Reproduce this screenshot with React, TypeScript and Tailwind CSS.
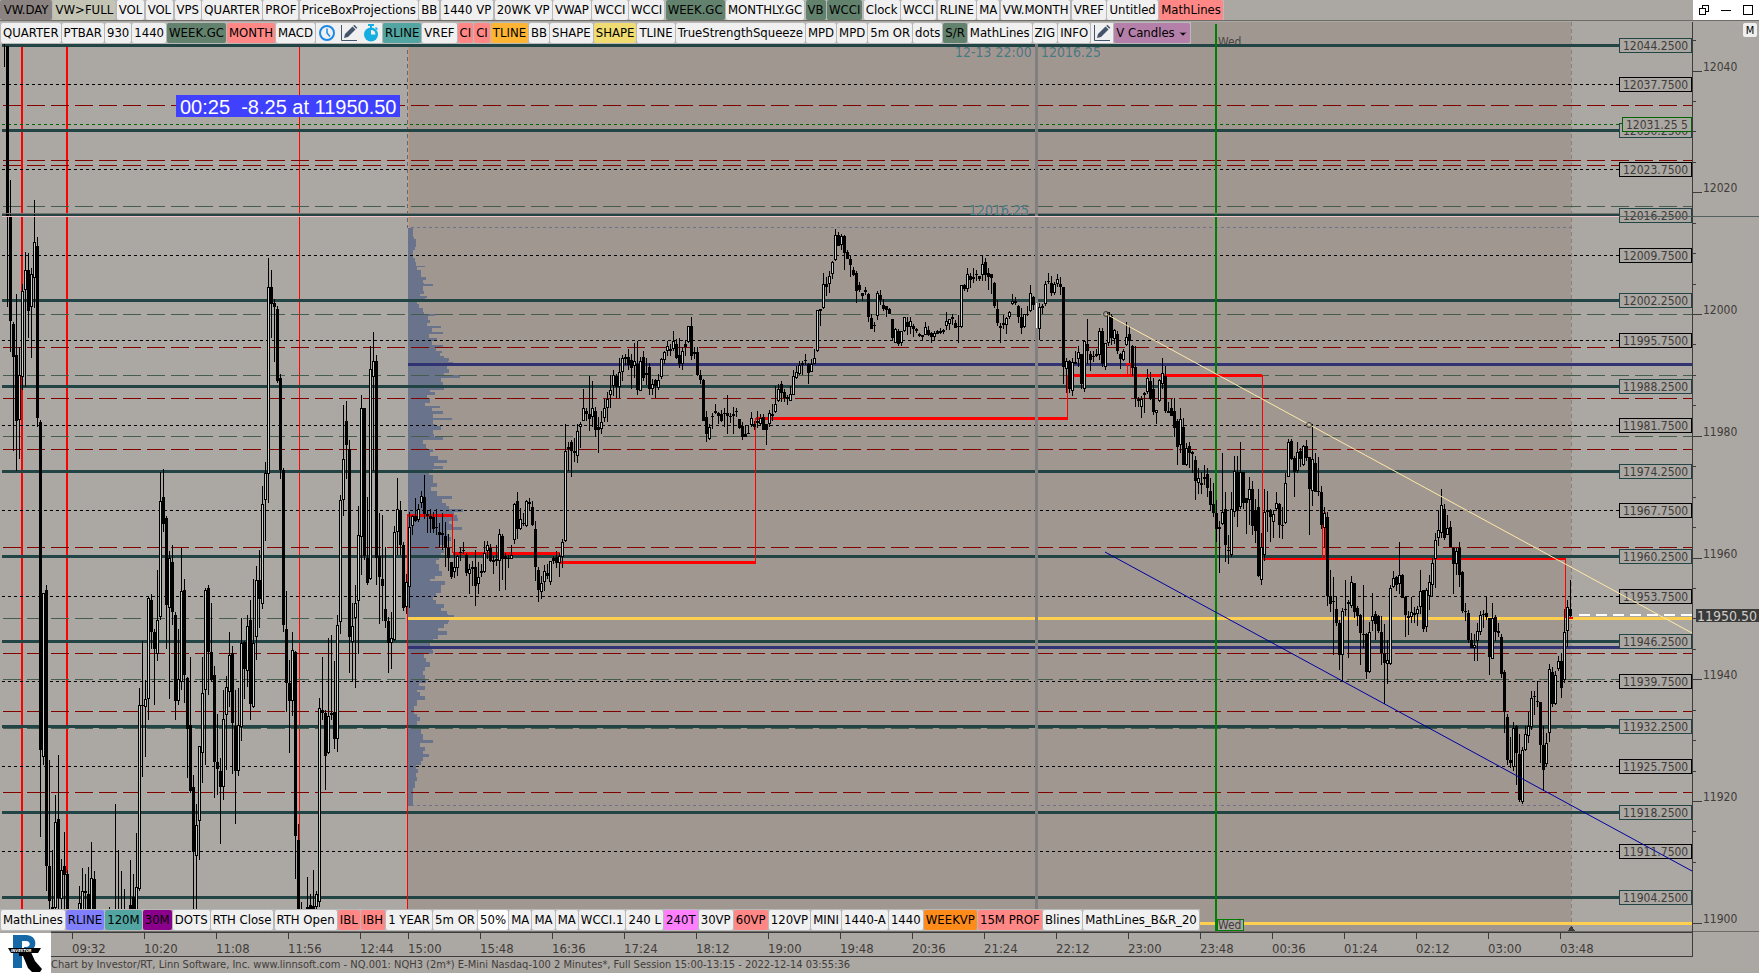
import { ChevronDown } from "lucide-react";

type Tone = { label: string; tone?: string };

const GREEN = "bg-[#63826d]";
const PINK = "bg-[#ff8886]";
const TEAL = "bg-[#52a5a1]";

const tabs: Tone[] = [
    { label: "VW.DAY", tone: "bg-[#8b8381] w-[52px]" },
    { label: "VW>FULL", tone: "bg-[#c3c4b4] w-[62px]" },
    { label: "VOL" },
    { label: "VOL" },
    { label: "VPS" },
    { label: "QUARTER" },
    { label: "PROF" },
    { label: "PriceBoxProjections" },
    { label: "BB" },
    { label: "1440 VP" },
    { label: "20WK VP" },
    { label: "VWAP" },
    { label: "WCCI" },
    { label: "WCCI" },
    { label: "WEEK.GC", tone: GREEN },
    { label: "MONTHLY.GC" },
    { label: "VB", tone: GREEN },
    { label: "WCCI", tone: GREEN },
    { label: "Clock" },
    { label: "WCCI" },
    { label: "RLINE" },
    { label: "MA" },
    { label: "VW.MONTH" },
    { label: "VREF" },
    { label: "Untitled" },
    { label: "MathLines", tone: PINK },
];

const toolsLeft: Tone[] = [
    { label: "QUARTER" },
    { label: "PTBAR" },
    { label: "930" },
    { label: "1440" },
    { label: "WEEK.GC", tone: GREEN },
    { label: "MONTH", tone: PINK },
    { label: "MACD" },
];

const toolsRight: Tone[] = [
    { label: "RLINE", tone: TEAL },
    { label: "VREF" },
    { label: "CI", tone: PINK },
    { label: "CI", tone: PINK },
    { label: "TLINE", tone: "bg-[#ffb533]" },
    { label: "BB" },
    { label: "SHAPE" },
    { label: "SHAPE", tone: "bg-[#f0dc70]" },
    { label: "TLINE" },
    { label: "TrueStrengthSqueeze" },
    { label: "MPD" },
    { label: "MPD" },
    { label: "5m OR" },
    { label: "dots" },
    { label: "S/R", tone: GREEN },
    { label: "MathLines" },
    { label: "ZIG" },
    { label: "INFO" },
];

const bottomTools: Tone[] = [
    { label: "MathLines" },
    { label: "RLINE", tone: "bg-[#8080ff]" },
    { label: "120M", tone: TEAL },
    { label: "30M", tone: "bg-[#8b008b]" },
    { label: "DOTS" },
    { label: "RTH Close" },
    { label: "RTH Open" },
    { label: "IBL", tone: PINK },
    { label: "IBH", tone: PINK },
    { label: "1 YEAR" },
    { label: "5m OR" },
    { label: "50%", tone: "bg-white" },
    { label: "MA" },
    { label: "MA" },
    { label: "MA" },
    { label: "WCCI.1" },
    { label: "240 L" },
    { label: "240T", tone: "bg-[#ff80ff]" },
    { label: "30VP" },
    { label: "60VP", tone: PINK },
    { label: "120VP" },
    { label: "MINI" },
    { label: "1440-A" },
    { label: "1440" },
    { label: "WEEKVP", tone: "bg-[#ff8c1a]" },
    { label: "15M PROF", tone: PINK },
    { label: "Blines" },
    { label: "MathLines_B&R_20" },
];

// price scale: 12044.25 sits at y 45, one point is 6.087 units
const priceY = (price: number) => Math.floor(45.2 + (12044.25 - price) * 6.087);

const LEFT = 2;
const RIGHT = 1692;
const OPEN_X = 408;
const NOW_X = 1571;

const solidLevels = Array.from({ length: 11 }, (_, i) => 12044.25 - i * 14);
const dottedLevels = Array.from({ length: 10 }, (_, i) => 12037.75 - i * 14);
const redDashes = [105, 160, 165, 347, 398, 449, 547, 653, 711, 792];
const greenDashes = [206, 314, 375, 436, 618, 679, 728];
const majorTicks = [12040, 12020, 12000, 11980, 11960, 11940, 11920, 11900];
const minorTicks = Array.from({ length: 28 }, (_, i) => 12045 - i * 5).filter((p) => p > 11900 && p % 20 !== 0);

const timeTicks: [number, string][] = [
    [72, "09:32"], [144, "10:20"], [216, "11:08"], [288, "11:56"], [360, "12:44"], [408, "15:00"],
    [480, "15:48"], [552, "16:36"], [624, "17:24"], [696, "18:12"], [768, "19:00"], [840, "19:48"],
    [912, "20:36"], [984, "21:24"], [1056, "22:12"], [1128, "23:00"], [1200, "23:48"], [1272, "00:36"],
    [1344, "01:24"], [1416, "02:12"], [1488, "03:00"], [1560, "03:48"],
];

// volume profile outline, "y width" pairs
const profile =
    "228 5,237 6,239 8,247 7,250 5,258 7,262 8,265 8,266 17,267 9,270 13,277 18,280 15,283 16,284 25,286 15,291 16,294 12,296 19,298 17,300 9,304 11,308 15,312 16,313 16,314 27,316 20,320 22,323 19,325 19,326 33,328 24,331 24,332 35,334 21,338 29,341 24,344 24,345 35,347 28,350 28,351 34,353 32,356 36,358 41,361 40,362 45,365 39,369 41,373 36,375 52,376 52,378 33,382 35,386 36,390 22,392 27,395 19,398 22,403 17,405 17,406 32,408 24,411 35,414 25,417 25,418 44,420 25,424 27,426 33,430 25,434 26,436 26,437 35,440 15,444 18,448 19,449 25,452 22,456 30,460 39,463 26,466 35,469 25,472 21,475 25,479 25,483 29,487 23,491 29,495 29,496 44,499 34,503 38,506 41,508 41,509 55,512 46,515 49,518 50,521 41,524 44,526 44,527 54,530 39,534 41,537 43,541 36,545 31,549 36,553 33,557 31,560 28,564 31,568 31,571 34,576 27,579 22,581 37,585 33,589 33,593 28,597 25,600 28,604 36,608 33,611 39,614 40,615 46,618 41,622 40,624 36,628 30,630 30,631 39,635 30,639 25,643 22,647 24,650 25,654 16,658 18,662 22,667 17,671 15,675 17,679 18,683 11,686 17,690 9,692 12,696 17,700 9,703 9,706 6,710 6,714 9,717 12,721 9,725 6,729 13,734 15,738 15,740 25,743 12,747 17,751 15,754 21,757 15,761 13,765 8,769 10,773 8,777 9,781 7,784 7,788 5,806 5";

type Segment = { x: number; y: number; unit: number; bars: string };

// "high top bottom low" per bar, a trailing u marks a rising (hollow) bar
const segments: Segment[] = [
    {
        x: 7, y: 220, unit: 2.24,
        bars: "-390 -390 -9 195,-90 -10 227 295,228 232 307 517,166 303 450 563,285 348 449 535u,144 159 352 381u,72 112 157 373u,74 112 203 264,108 120 195 308u,-45 50 130 196u,37 59 444 463,447 452 1188 1383,836 836 1203 1220u,818 829 1447 1504,1210 1446 1526 1560,1411 1538 1560 1560,1288 1348 1542 1560u,1198 1341 1518 1560,1432 1457 1521 1545u,1371 1446 1468 1545,1457 1464 1580 1600,1600 1600 1601 1601,1600 1600 1601 1601,1600 1600 1601 1601,1492 1530 1600 1600u,1452 1504 1600 1600u,1464 1504 1508 1600,1449 1510 1560 1600,1393 1473 1600 1600u,1458 1477 1600 1600,1600 1600 1601 1601,1600 1600 1601 1601,1600 1600 1601 1601,1600 1600 1601 1601,1540 1600 1601 1601,1600 1600 1601 1601,1308 1600 1601 1601,1411 1600 1601 1601,1458 1600 1601 1601,1499 1600 1601 1601,1600 1600 1601 1601,1434 1535 1560 1600,1465 1517 1600 1600,1373 1495 1600 1600u,1048 1087 1498 1504u,943 1086 1089 1247,1030 1074 1090 1202u,844 846 1072 1119u,837 851 922 962,916 922 962 1086,785 896 972 987u,564 629 890 896u,558 621 680 698,664 668 863 960,741 757 868 1072u,728 765 877 908,878 884 1078 1119,916 1028 1078 1086u,735 830 1034 1053u,804 829 1020 1083,1023 1027 1140 1250,978 1132 1280 1284,1243 1271 1416 1600,1308 1356 1425 1600u,1178 1178 1346 1433u,978 1060 1194 1260u,824 829 1053 1220u,818 824 968 1063,858 968 1030 1034,1000 1019 1215 1294,1107 1215 1230 1289,1206 1234 1269 1397,1053 1118 1269 1300u,1021 1046 1108 1233u,922 974 1058 1090u,954 971 1127 1240,1053 1134 1235 1354,1048 1132 1234 1245u,892 948 1136 1168u,942 946 1006 1073,884 909 1010 1046u,851 896 1084 1120,804 948 1090 1092u,776 807 934 985u,740 807 850 914,596 636 860 871u,542 566 628 720u,85 151 568 634u,112 151 189 264,178 187 195 319,193 199 360 366,344 355 561 581,556 559 908 922,831 916 1037 1103,986 1036 1078 1194,923 964 1078 1112u,966 968 1379 1477,1353 1388 1600 1600,1527 1600 1601 1601,1600 1600 1601 1601,1472 1540 1600 1600,1510 1535 1545 1600,1456 1536 1600 1600,1504 1510 1538 1560u,1071 1094 1528 1540u,978 1098 1104 1120,1098 1104 1201 1277,936 1112 1195 1197u,930 1104 1109 1120u,987 1101 1162 1185,884 908 1162 1191u,615 627 901 927u,414 536 628 663u,405 451 504 581,493 514 935 1014,857 910 946 1034u,818 858 891 1048u,641 706 854 973u,393 420 711 796u,420 420 752 762,620 757 812 817,282 334 804 806u,251 316 352 562u,303 316 758 818,656 753 799 906,661 804 819 898,732 871 898 914,890 898 947 1014,877 936 948 1005u,686 699 940 942u,578 648 699 750u,630 650 728 750,722 728 868 876,793 811 867 883u,655 688 822 870u",
    },
    {
        x: 412, y: 220, unit: 2.613,
        bars: "770 773 800 822u,726 773 786 790,742 756 785 788u,708 720 740 752u,666 724 768 780,758 768 773 817u,755 774 782 818,762 777 807 818,755 801 806 822u,792 815 822 858,765 818 824 862,788 826 856 908,820 856 882 916,893 894 933 938,834 908 921 935u,876 878 909 931u,855 868 871 890,842 861 864 872,870 876 922 930,899 913 924 977u,890 906 913 956u,862 906 956 1008,893 933 952 977u,899 918 922 934,839 870 921 922u,839 850 864 886u,846 856 890 894,877 888 893 924u,848 886 892 905,808 820 892 970u,820 826 886 940,870 878 886 967,876 884 887 909,848 875 885 886u,740 741 837 847u,711 735 808 834,752 780 808 810u,766 792 795 800,732 735 800 801u,727 738 741 760,735 751 798 800,786 808 908 942,906 915 966 998,930 948 973 990u,902 918 947 970u,898 923 930 938,890 892 945 955u,878 883 892 900,864 880 895 909,871 878 897 933u,834 842 880 909u,533 604 840 842u,580 592 598 656,575 580 604 672,570 604 609 632,533 552 616 634u,528 533 542 596u,442 492 524 525u,491 498 508 526,408 507 521 551,421 492 514 542u,489 500 548 566,514 540 548 609,500 527 547 559u,468 492 518 527u,450 468 490 528u,405 444 458 491u,392 405 433 460u,402 408 436 466,361 398 436 466u,353 361 397 421u,350 358 363 380,337 359 378 392,350 366 388 442,322 368 382 412u,317 375 444 456,359 368 447 448u,342 359 412 420,361 400 404 430,374 385 441 458,416 429 442 457u,415 417 434 466,403 418 440 444u,361 362 411 416u,343 346 366 375u,317 330 343 356u,324 336 342 356,290 315 337 342u,310 324 360 363,308 352 376 387,332 343 375 391u,314 325 332 356,277 278 320 321u,253 278 356 366,332 345 350 364u,333 345 406 408,392 406 418 429,416 417 524 525,499 515 558 580,532 541 573 575u,504 512 516 545,481 499 504 506,503 504 512 532,497 507 524 528,491 504 508 540,457 504 511 558,505 512 516 530,489 508 513 558u,491 499 503 516,519 520 543 545,528 539 567 575,535 559 566 567,536 556 559 559,503 517 535 540u,524 533 542 549,499 526 530 543,508 518 533 536u,507 516 548 549,533 533 548 588,496 505 533 541u,482 508 512 525,434 482 503 504u,429 442 474 476u,421 429 452 476,442 450 465 475,458 462 468 483,435 454 472 473u,392 408 456 457u,382 398 412 415u,368 378 403 405u,368 374 378 405,350 367 369 380,374 377 400 429,363 375 396 398u,338 361 375 376u,234 234 343 345u",
    },
    {
        x: 820, y: 200, unit: 3,
        bars: "327 328 334 377u,219 253 325 326u,230 253 260 288,213 228 253 280u,183 185 222 237u,88 105 181 182u,96 106 137 139,102 107 136 150u,106 108 158 210,150 155 176 178,168 176 196 230,201 210 226 229,214 219 272 308,247 256 271 276,279 279 287 304,261 270 275 286u,280 283 350 367,342 355 387 388,367 374 378 396,274 279 349 360u,270 284 300 316,297 314 327 333,317 319 331 350,323 326 341 342,356 357 413 422,384 388 428 429u,387 394 431 437,392 394 430 438u,351 352 393 395u,351 366 381 405,352 364 380 402u,372 379 388 411,385 388 394 398,399 403 408 411,405 406 411 421,366 381 404 405u,379 391 404 408,397 399 411 429,394 398 412 420u,391 393 401 402,384 394 399 402,386 390 395 403,337 364 377 390u,357 357 372 389u,343 350 358 376u,360 370 384 385,344 377 382 429,255 256 381 384u,251 256 268 272,204 223 268 275u,220 228 240 264,204 230 236 248,210 222 226 244,228 229 237 244,167 193 225 242u,174 186 225 243,204 219 232 270,223 223 235 282,246 248 317 323,300 327 370 378,369 378 384 429,345 370 376 387u,350 354 376 402u,333 336 350 357u,282 303 312 315u,292 302 309 315u,316 318 352 370,324 351 384 402,343 343 382 384u,319 341 346 348,255 279 334 337u,289 290 316 330,310 312 382 384,310 320 388 420u,311 317 325 342u,243 252 312 318u,219 242 246 252,228 249 278 288,247 253 278 286u,222 237 251 262u,231 253 261 284,261 262 500 552,474 482 508 578u,480 484 568 580,474 486 574 587u,453 486 491 492,438 456 478 500u,462 463 552 567,420 423 566 576u,357 432 453 492,453 462 479 513,453 467 472 487,447 463 468 472,384 393 465 481u,384 394 492 500,429 430 500 510u,336 337 429 438u,343 348 413 436,387 390 418 432u,393 402 452 462,460 462 478 507,447 453 480 484u,366 410 436 438u,378 402 424 490,436 438 505 528,438 500 597 621,592 598 602 621,588 597 620 655u,576 580 586 639u,508 535 576 583u,516 544 597 600,535 568 636 645,630 630 638 672u,537 540 604 606u,474 520 551 567u,498 528 632 639,606 633 639 640,597 624 648 649,594 634 684 711,657 662 742 795,624 658 734 760u,654 682 794 796,730 744 795 797u,727 738 760 805,753 755 761 818,768 780 843 900,804 834 849 882u",
    },
    {
        x: 1201, y: 320, unit: 3,
        bars: "457 488 494 522,435 470 476 495,445 462 504 531,475 513 555 572,490 553 580 590,540 578 628 665,604 620 628 758u,399 575 612 614u,516 568 674 725,644 689 693 732,516 568 704 712u,408 454 575 590u,408 455 574 621,366 455 560 568u,455 456 548 568,533 535 548 642,472 508 541 615u,483 508 617 645,538 569 632 669,506 560 767 772,639 680 780 795u,506 576 704 722u,513 569 577 635,568 570 590 666,570 582 607 653u,517 550 568 570u,549 553 614 653,560 615 619 656,458 490 610 612u,357 367 470 471u,358 362 416 421,408 415 455 530,366 395 454 458u,384 393 416 440,375 378 434 438u,359 379 415 422,411 412 506 644,312 418 512 557u,399 430 515 516,411 512 517 528,498 516 616 628,562 580 625 684u,576 590 829 857,750 829 853 877,771 842 846 1005,830 868 908 918,900 908 1004 1050,864 873 1004 1085u,780 868 871 889,841 846 851 1014,768 787 857 864u,788 790 876 894,859 864 888 917,882 884 940 1035,795 941 945 984,939 943 1057 1077,906 937 1056 1058u,820 888 904 934u,873 882 912 960,884 889 934 938,889 936 998 1036,913 998 1030 1152,960 1020 1033 1091u,795 804 1031 1035u,753 773 802 804u,768 771 796 813,667 764 793 822u,762 764 833 835,828 832 885 952,873 889 893 944,830 876 892 908u,860 878 886 908,858 866 883 917u,750 812 860 882u,810 811 926 935,804 810 922 935u,765 787 827 870u,713 730 794 830u,638 660 716 804u,571 631 654 678u,507 554 638 653u,553 568 655 661,585 625 645 646u,602 622 681 682,682 683 733 822,683 692 733 765u,666 684 766 800,753 755 872 880,850 872 876 904,870 878 960 968,940 960 984 985,943 975 985 1022u,908 932 962 1022u,873 886 935 944u,871 882 886 924,829 880 892 900,894 895 1010 1064,849 893 1017 1018u,886 891 936 963,909 934 938 950,943 951 1063 1075,1051 1056 1177 1240,1182 1191 1319 1335,1250 1320 1328 1343,1207 1225 1340 1353u,1216 1219 1300 1396,1243 1303 1440 1446,1280 1290 1446 1452u,1218 1243 1291 1292u,1176 1218 1248 1270u,1114 1135 1222 1230u,1112 1128 1132 1185,1084 1142 1146 1160,1146 1147 1276 1330,1218 1276 1351 1412,1240 1270 1333 1337u,1033 1048 1238 1266u,1041 1056 1151 1160,1053 1066 1152 1155u,1008 1024 1046 1054u,1000 1022 1104 1135,868 937 1080 1090u,840 860 934 980u,780 868 888 890",
    },
];

const candles = segments.flatMap(({ x, y, unit, bars }) =>
    bars.split(",").map((bar, i) => {
        const [high, top, bottom, low] = bar.replace("u", "").split(" ").map((v) => Math.round(y + Number(v) / unit));
        return { x: x + i * 3, high, top, bottom: Math.max(bottom, top + 1), low, up: bar.endsWith("u") };
    })
);

const profileRows = profile.split(",").map((row) => row.split(" ").map(Number));

const ToolButton: React.FC<Tone> = ({ label, tone = "bg-[#f0f0f0]" }) => (
    <button type="button" className={`${tone} h-full shrink-0 rounded-[2px] px-0.5 pb-0.5 whitespace-nowrap`}>
        {label}
    </button>
);

const PencilIcon = () => (
    <svg viewBox="0 0 18 18" className="size-[18px]">
        <path d="M1.5 1v15.5H17" fill="none" stroke="#44546a" strokeWidth="1" />
        <path d="M4 14l1-4 7.5-7.5 3 3L8 13z" fill="#44546a" />
        <path d="M13.2 1.8l1.2-1.1 3 3-1.2 1.1z" fill="#44546a" />
    </svg>
);

const ClockIcon = () => (
    <svg viewBox="0 0 18 18" className="size-[18px]">
        <circle cx="9" cy="9" r="7" fill="none" stroke="#1e88e5" strokeWidth="2" />
        <path d="M9 4.5V9l3 3.5" fill="none" stroke="#1e88e5" strokeWidth="1.5" />
    </svg>
);

const StopwatchIcon = () => (
    <svg viewBox="0 0 18 18" className="size-[18px]">
        <path d="M6 0h6v2H6zM8 2h2v2H8zM14 3l2 2-1 1-2-2z" fill="#14aee0" />
        <circle cx="9" cy="10.5" r="7" fill="#14aee0" />
        <path d="M9 6v4.5h4.5A4.5 4.5 0 0 0 9 6z" fill="#f0f0f0" />
    </svg>
);

const Chart = () => (
    <svg viewBox="0 21 1759 910" preserveAspectRatio="none" className="absolute inset-0 size-full" shapeRendering="crispEdges">
        <rect x={OPEN_X} y={22} width={NOW_X - OPEN_X} height={909} fill="#9f9790" />

        {/* session lines */}
        <rect x={21} y={43} width={2} height={888} fill="#ff0000" />
        <rect x={66} y={43} width={2} height={830} fill="#ff0000" />
        <rect x={299} y={22} width={1} height={822} fill="#ff0000" />
        <rect x={408} y={22} width={1} height={206} fill="#c99777" />
        <path d="M407.5 22V228" stroke="#62667c" strokeDasharray="4 3" />
        <path d={`M${NOW_X}.5 22V925`} stroke="#87817c" strokeDasharray="4 3" />

        {/* volume profile */}
        {profileRows.slice(0, -1).map(([y, w], i) => (
            <rect key={y} x={OPEN_X} y={y} width={w} height={profileRows[i + 1][0] - y} fill="#69738c" />
        ))}
        <path d={`M411 227.5H${NOW_X}M411 805.5H${NOW_X}`} stroke="#6f7289" strokeDasharray="3 3" />

        {/* price levels */}
        {greenDashes.map((y) => (
            <path key={y} d={`M3 ${y}.5H${RIGHT}`} stroke="#465c4c" strokeDasharray="18 6" />
        ))}
        {redDashes.map((y) => (
            <path key={y} d={`M3 ${y}.5H${RIGHT}`} stroke="#800000" strokeDasharray="18 6" />
        ))}
        {dottedLevels.map((p) => (
            <path key={p} d={`M${LEFT} ${priceY(p)}.5H1619`} stroke="#000" strokeDasharray="3 3" />
        ))}
        <path d="M2 124.5H1622" stroke="#006400" strokeDasharray="3 3" />
        {solidLevels.map((p) => (
            <rect key={p} x={LEFT} y={priceY(p) - 1} width={1617} height={3} fill="#234444" />
        ))}
        <rect x={OPEN_X} y={363} width={RIGHT - OPEN_X} height={3} fill="#313373" />
        <rect x={OPEN_X} y={646} width={RIGHT - OPEN_X} height={3} fill="#313373" />
        <rect x={OPEN_X} y={617} width={RIGHT - OPEN_X} height={3} fill="#ffcf50" />
        <rect x={LEFT} y={922} width={RIGHT - LEFT} height={3} fill="#ffcf50" />

        {/* day separator */}
        <rect x={1215} y={24} width={2} height={907} fill="#008000" />
        <rect x={1217.5} y={919.5} width={26} height={11} fill="#aba7a2" stroke="#008000" />
        <text x={1218} y={929} fontSize={12} fill="#3f3c3a">Wed</text>
        <text x={1218} y={46} fontSize={12} fill="#4a4745">Wed</text>
        <rect x={1217} y={44} width={40} height={3} fill="#234444" />

        {/* stepped mean */}
        <path d="M407.5 909V515M452.5 515V553M755.5 562V418M1067.5 418V375M1262.5 375V558M1565.5 559V618M1127.5 375V363M1130.5 375V363M1322.5 558V512M1325.5 558V512" stroke="#ff0000" fill="none" />
        <path d="M407 515.5H453M453 553.5H560M560 562.5H756M756 418.5H1068M1068 375.5H1262" stroke="#ff0000" strokeWidth={3} fill="none" />
        <path d="M1126 364H1131M1263 559H1566M1569 618H1573" stroke="#ff0000" strokeWidth={2} fill="none" />

        {candles.map((c) => (
            <g key={c.x}>
                <rect x={c.x} y={c.high} width={1} height={Math.max(c.low - c.high, 1)} />
                <rect x={c.x - 1} y={c.top} width={3} height={c.bottom - c.top} />
                {c.up && c.bottom - c.top > 2 && (
                    <rect x={c.x} y={c.top + 1} width={1} height={c.bottom - c.top - 2} fill="#c8d2ca" />
                )}
            </g>
        ))}
        <rect x={4} y={44} width={1} height={23} />

        {/* crosshair */}
        <rect x={1035} y={44} width={3} height={887} fill="#808080" />
        <rect x={1036} y={303} width={1} height={25} fill="#fff" />
        <rect x={LEFT} y={213} width={1617} height={1} fill="#77736e" />
        <rect x={LEFT} y={216} width={1617} height={1} fill="#f0c4c8" />
        <rect x={1619} y={216} width={140} height={1} fill="#55605f" />
        <g fontSize={14} fill="#3f7f7c" className="[text-shadow:1px_0_0_#c98aa4]">
            <text x={955} y={57}>12-13 22:00</text>
            <text x={1041} y={57}>12016.25</text>
            <text x={969} y={215}>12016.25</text>
        </g>

        {/* price tags */}
        {[...solidLevels, ...dottedLevels].map((p) => (
            <g key={p}>
                <rect x={1619.5} y={priceY(p) - 6.5} width={72} height={14} fill="#aba7a2" stroke={p % 1 === 0.25 ? "#234444" : "#000"} />
                <text x={1623} y={priceY(p) + 5} fontSize={12} fill="#3f3c3a">{p.toFixed(4)}</text>
            </g>
        ))}
        <rect x={1622.5} y={117.5} width={69} height={14} fill="#aba7a2" stroke="#006400" />
        <text x={1626} y={129} fontSize={12} fill="#3f3c3a">12031.25 5</text>
        <rect x={1619} y={216} width={73} height={1} fill="#55605f" />

        {/* trend channel */}
        <g shapeRendering="auto" fill="none">
            <path d="M1106 314L1692 633" stroke="#ffe9a8" />
            <path d="M1105 552L1692 871" stroke="#0000a0" />
            <circle cx={1106} cy={314} r={2.5} stroke="#44403c" />
            <circle cx={1309} cy={425} r={2.5} stroke="#44403c" />
        </g>

        {/* price axis */}
        <rect x={1692} y={22} width={1} height={909} fill="#3c3c3c" />
        {majorTicks.map((p) => (
            <g key={p}>
                <rect x={1693} y={priceY(p)} width={9} height={1} fill="#3c3c3c" />
                <text x={1703} y={priceY(p)} fontSize={12} fill="#3f3c3a">{p}</text>
            </g>
        ))}
        {minorTicks.map((p) => (
            <rect key={p} x={1693} y={priceY(p)} width={3} height={1} fill="#3c3c3c" />
        ))}
        <path d="M1579 615H1692" stroke="#fff" strokeWidth={2} strokeDasharray="11 6" />
        <rect x={1696} y={609} width={63} height={13} fill="#3a3a3a" />
        <text x={1697} y={621} fontSize={14} fill="#cfcbc6">11950.50</text>
        <path d="M1571.5 926l4 5h-8z" fill="#3c3c3c" />
    </svg>
);

const TimeAxis = () => (
    <svg viewBox="51 931 1708 26" preserveAspectRatio="none" className="h-[26px] w-full" shapeRendering="crispEdges">
        <rect x={51} y={931} width={1708} height={1} fill="#6f6b67" />
        <rect x={51} y={932} width={1642} height={1} fill="#3c3c3c" />
        <rect x={51} y={956} width={1642} height={1} fill="#3c3c3c" />
        <rect x={1692} y={931} width={1} height={26} fill="#3c3c3c" />
        {timeTicks.map(([x, label]) => (
            <g key={label}>
                <rect x={x} y={933} width={1} height={6} fill="#3c3c3c" />
                <text x={x} y={953} fontSize={13} fill="#3f3c3a">{label}</text>
            </g>
        ))}
    </svg>
);

const Logo = () => (
    <svg viewBox="0 0 51 40" className="h-10 w-[51px] shrink-0 bg-white">
        <path d="M13 2h13c12 0 12 15 3 16h-5v-4h2c5 0 5-6 0-6h-4v27h-9z" fill="#1668a6" />
        <path d="M19 17h11l5 11 7 8-2 3h-8l-4-4-5-12h-4z" fill="#000" />
        <path d="M8 15h33l-3 5H11z" fill="#000" />
        <text x="11" y="19" fontSize="4" fontWeight="bold" fontStyle="italic" fill="#fff">INVESTOR</text>
    </svg>
);

const App: React.FC = () => {
    return (
        <div className="flex h-screen w-full flex-col overflow-hidden bg-[#aba7a2] font-['DejaVu_Sans_Condensed','DejaVu_Sans',sans-serif] text-[13px] leading-none text-black">
            <header className="flex h-[21px] shrink-0 justify-between border-b border-[#6f6b67]">
                <nav className="flex w-[1224px] justify-between bg-[#b9b9b9] pr-px">
                    {tabs.map((tab, i) => (
                        <ToolButton key={i} {...tab} />
                    ))}
                </nav>
                <div className="flex w-[66px] items-center justify-between bg-white px-1.5">
                    <button type="button" aria-label="Restore">
                        <svg viewBox="0 0 10 10" className="size-2.5" fill="none" stroke="#000" shapeRendering="crispEdges">
                            <path d="M.5 3.5h6v6h-6zM3.5 3V.5h6v6H7" />
                        </svg>
                    </button>
                    <button type="button" aria-label="Minimize">
                        <svg viewBox="0 0 10 10" className="size-2.5" fill="none" stroke="#000" shapeRendering="crispEdges">
                            <path d="M0 5.5h10" />
                        </svg>
                    </button>
                    <button type="button" aria-label="Maximize">
                        <svg viewBox="0 0 10 10" className="size-2.5" fill="none" stroke="#000" shapeRendering="crispEdges">
                            <path d="M.5.5h9v9h-9z" />
                        </svg>
                    </button>
                </div>
            </header>

            <main className="relative min-h-0 flex-1">
                <Chart />
                <div className="absolute top-px left-0 flex h-[22px] gap-px bg-[#b9b9b9] px-px py-px">
                    {toolsLeft.map((tool, i) => (
                        <ToolButton key={i} {...tool} />
                    ))}
                    <div className="flex items-center gap-1 bg-[#f0f0f0] px-0.5">
                        <button type="button" aria-label="Clock"><ClockIcon /></button>
                        <button type="button" aria-label="Draw"><PencilIcon /></button>
                        <button type="button" aria-label="Timer"><StopwatchIcon /></button>
                    </div>
                    {toolsRight.map((tool, i) => (
                        <ToolButton key={i} {...tool} />
                    ))}
                    <button type="button" aria-label="Edit" className="bg-[#f0f0f0] px-0.5"><PencilIcon /></button>
                    <div className="relative flex">
                        <select aria-label="Chart style" className="h-full w-[76px] appearance-none rounded-[2px] bg-[#b47fa8] pb-0.5 pl-0.5">
                            <option>V Candles</option>
                        </select>
                        <ChevronDown className="pointer-events-none absolute top-1.5 right-0.5 size-2.5 fill-black" />
                    </div>
                </div>
                <div className="absolute top-[74px] left-[176px] h-[22px] bg-[#4040ff] px-1 font-['Liberation_Sans',sans-serif] text-xl leading-6 whitespace-pre text-white">
                    00:25  -8.25 at 11950.50
                </div>
                <button type="button" className="absolute top-0.5 right-0.5 size-3.5 rounded-[2px] bg-[#f0f0f0] text-[11px]">M</button>
                <div className="absolute bottom-0 left-0 flex h-[22px] w-[1200px] justify-between bg-[#b9b9b9] px-px py-px">
                    {bottomTools.map((tool, i) => (
                        <ToolButton key={i} {...tool} />
                    ))}
                </div>
            </main>

            <footer className="flex h-[42px] shrink-0 items-end">
                <Logo />
                <div className="flex h-full min-w-0 flex-1 flex-col">
                    <TimeAxis />
                    <p className="text-[11px] leading-4 whitespace-nowrap text-[#3f3c3a]">
                        Chart by Investor/RT, Linn Software, Inc. www.linnsoft.com - NQ.001: NQH3 (2m*) E-Mini Nasdaq-100 2 Minutes*, Full Session 15:00-13:15 - 2022-12-14 03:55:36
                    </p>
                </div>
            </footer>
        </div>
    );
};

export default App;
